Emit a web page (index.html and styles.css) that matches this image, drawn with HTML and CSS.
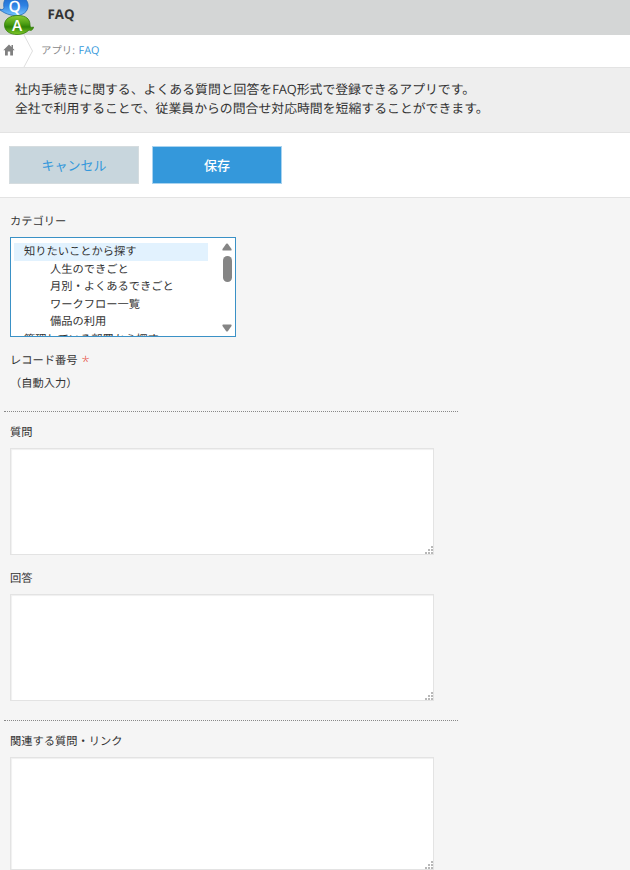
FILE: index.html
```html
<!DOCTYPE html>
<html lang="ja">
<head>
<meta charset="utf-8">
<title>FAQ</title>
<link rel="stylesheet" href="styles.css">
</head>
<body>
<header class="app-header">
  <svg class="logo" width="36" height="35" viewBox="0 0 36 35">
    <defs>
      <linearGradient id="blue" x1="0" y1="0" x2="0" y2="1"><stop offset="0" stop-color="#1e67c6"/><stop offset=".5" stop-color="#2f83e4"/><stop offset="1" stop-color="#75c4ff"/></linearGradient>
      <linearGradient id="green" x1="0" y1="0" x2="0" y2="1"><stop offset="0" stop-color="#8ccf35"/><stop offset=".45" stop-color="#4a9c12"/><stop offset=".6" stop-color="#2f8206"/><stop offset="1" stop-color="#82cc2b"/></linearGradient>
    </defs>
    <path d="M0 9C1 10 3 10 4 8C2-2 9-5 16-4C24-4 29 1 28 7C27 14 19 17 11 15C6 14 3 12 0 10Z" fill="url(#blue)" stroke="#2469b8" stroke-width=".8"/>
    <path d="M4.500 25C4.500 19 10 15.500 18 15.500C26 15.500 30 19 30 25C30 27 31 28 33.500 27C33 30 31 31 29 30C26 33 22 34.500 17 34.500C10 34.500 4.500 31 4.500 25Z" fill="url(#green)" stroke="#357f0b" stroke-width=".8"/>
    <text class="logo-letter" x="14.500" y="12">Q</text>
    <text class="logo-letter" x="17" y="31">A</text>
  </svg>
  <h1>FAQ</h1>
</header>
<nav class="breadcrumb">
  <svg class="home" width="12" height="12" viewBox="0 0 12 12"><path d="M6 .5L8.500 3V1H10V4.500L11.700 6.300H10V11.500H7.200V7.500H4.800V11.500H2V6.300H.3Z" fill="#808080"/></svg>
  <svg class="chevron" width="12" height="32" viewBox="0 0 12 32"><path d="M1 0L9.500 16L1 32" fill="none" stroke="#dedede"/></svg>
  <span class="crumb">アプリ: <a>FAQ</a></span>
</nav>
<p class="description">社内手続きに関する、よくある質問と回答を<span class="latin">FAQ</span>形式で登録できるアプリです。<br>全社で利用することで、従業員からの問合せ対応時間を短縮することができます。</p>
<div class="actions">
  <button class="button cancel">キャンセル</button>
  <button class="button save">保存</button>
</div>
<main class="form">
  <div class="label category-label">カテゴリー</div>
  <div class="category">
    <ul class="tree">
      <li class="selected">知りたいことから探す</li>
      <li class="child">人生のできごと</li>
      <li class="child">月別・よくあるできごと</li>
      <li class="child">ワークフロー一覧</li>
      <li class="child">備品の利用</li>
      <li>管理している部署から探す</li>
    </ul>
    <div class="scrollbar">
      <svg width="10" height="8" viewBox="0 0 10 8"><path d="M4.200 .8Q5 0 5.800 .8L9.500 6Q10 7.500 9 7.500H1Q0 7.500 .5 6Z" fill="#858585"/></svg>
      <div class="thumb"></div>
      <svg class="down" width="10" height="8" viewBox="0 0 10 8"><path d="M.5 2Q0 .5 1 .5H9Q10 .5 9.500 2L5.800 7.200Q5 8 4.200 7.200Z" fill="#858585"/></svg>
    </div>
  </div>
  <div class="label record-label">レコード番号<span class="required">*</span></div>
  <div class="record-value">（自動入力）</div>
  <hr class="divider">
  <div class="label question-label">質問</div>
  <div class="area"><svg class="grip" width="9" height="9" viewBox="0 0 9 9"><path d="M6 0h2v2h-2zM3 3h2v2h-2zM6 3h2v2h-2zM0 6h2v2h-2zM3 6h2v2h-2zM6 6h2v2h-2z"/></svg></div>
  <div class="label answer-label">回答</div>
  <div class="area"><svg class="grip" width="9" height="9" viewBox="0 0 9 9"><path d="M6 0h2v2h-2zM3 3h2v2h-2zM6 3h2v2h-2zM0 6h2v2h-2zM3 6h2v2h-2zM6 6h2v2h-2z"/></svg></div>
  <hr class="divider second">
  <div class="label related-label">関連する質問・リンク</div>
  <div class="area related"><svg class="grip" width="9" height="9" viewBox="0 0 9 9"><path d="M6 0h2v2h-2zM3 3h2v2h-2zM6 3h2v2h-2zM0 6h2v2h-2zM3 6h2v2h-2zM6 6h2v2h-2z"/></svg></div>
</main>
</body>
</html>
```
FILE: styles.css
```css
* { box-sizing: border-box; }
html { height: 870px; overflow: hidden; }
body {
  margin: 0;
  height: 870px;
  overflow: hidden;
  background: #f5f5f5;
  color: #333;
  font-family: "Open Sans", "Noto Sans CJK JP", sans-serif;
  font-size: 11.25px;
  text-rendering: geometricPrecision;
}
.app-header { display: flex; height: 35px; background: #d4d6d6; }
.logo { flex: none; }
.logo-letter { font: 600 15.5px "Open Sans", sans-serif; fill: #fff; text-anchor: middle; }
h1 { margin: 0 0 0 11.5px; font-size: 13.3px; line-height: 29px; font-weight: 700; }
.breadcrumb {
  display: flex;
  align-items: center;
  height: 32px;
  padding-left: 3px;
  background: #fff;
  color: #888;
  font-size: 10.4px;
}
.home { margin-bottom: 2px; }
.chevron { margin-left: 8px; }
.crumb { margin-left: 6px; line-height: 32px; height: 32px; }
.crumb a { margin-left: 1px; color: #3498db; font-size: 10.8px; }
.description {
  margin: 0;
  height: 66px;
  padding: 12px 15px;
  background: #eee;
  border-top: 1px solid #e3e3e3;
  border-bottom: 1px solid #e3e3e3;
  font-size: 12.86px;
  line-height: 19.2px;
  white-space: nowrap;
}
.latin { letter-spacing: -.1px; }
.actions {
  display: flex;
  gap: 13px;
  height: 65px;
  padding: 13px 9px;
  background: #fff;
  border-bottom: 1px solid #e3e3e3;
}
.button {
  height: 38px;
  width: 130px;
  padding: 0 0 1px;
  border: 1px solid #d5dcdf;
  background: #c8d6dd;
  color: #3498db;
  font: 13px "Open Sans", "Noto Sans CJK JP", sans-serif;
}
.save { background: #3498db; border-color: #a9d3ef; color: #fff; font-weight: 500; }
.form { padding-left: 10px; }
.label { height: 18px; line-height: 18px; }
.category-label { margin-top: 15px; }
.category {
  display: flex;
  justify-content: space-between;
  width: 226px;
  height: 100px;
  margin-top: 6px;
  padding: 4px 3px;
  border: 1px solid #3a91c6;
  background: #fff;
  overflow: hidden;
}
.tree { width: 194px; height: 94px; margin: 0; padding: 1px 0 0; list-style: none; overflow: hidden; }
.tree li { height: 17.6px; padding-left: 10px; line-height: 17.6px; white-space: nowrap; }
.tree .child { padding-left: 36px; }
.tree .selected { background: #e2f2fe; }
.scrollbar { display: flex; flex-direction: column; align-items: center; width: 10px; padding-top: 1px; }
.scrollbar svg { flex: none; }
.thumb { width: 9px; height: 26px; margin-top: 5px; border-radius: 5px; background: #858585; }
.down { margin-top: 42px; }
.record-label { display: flex; margin-top: 15px; }
.required { margin-left: 4px; color: #e74c3c; font-size: 15px; line-height: 21px; font-weight: 300; }
.record-value { margin-top: 5px; height: 18px; line-height: 18px; }
.divider { width: 454px; height: 1px; margin: 18px 0 0 -6px; border: 0; border-top: 1px dotted #888; }
.question-label { margin-top: 12px; }
.area {
  display: flex;
  align-items: flex-end;
  justify-content: flex-end;
  width: 424px;
  height: 107px;
  margin-top: 6px;
  background: #fff;
  border: 1px solid #e3e3e3;
  box-shadow: inset 1px 1px 1px #f0f0f0;
}
.grip { flex: none; margin: 0 -1px -1px 0; fill: #b8b8b8; }
.answer-label { margin-top: 15px; }
.second { margin-top: 19px; }
.related-label { margin-top: 12px; }
.related { height: 113px; }
```
